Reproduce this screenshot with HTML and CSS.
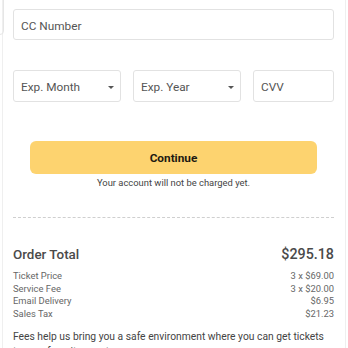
FILE: index.html
```html
<!DOCTYPE html>
<html lang="en">
<head>
    <meta charset="UTF-8">
    <meta name="viewport" content="width=device-width, initial-scale=1.0">
    <title>Checkout</title>
    <link rel="stylesheet" href="styles.css">
</head>
<body>
    <div class="peek"></div>
    <div class="card">
        <!-- Card fields -->
        <div class="field field-full">CC Number</div>

        <div class="field-row">
            <div class="field select">Exp. Month <span class="caret"></span></div>
            <div class="field select">Exp. Year <span class="caret"></span></div>
            <div class="field cvv">CVV</div>
        </div>

        <!-- Continue -->
        <button class="continue">Continue</button>
        <p class="note">Your account will not be charged yet.</p>

        <hr class="divider">

        <!-- Summary -->
        <div class="total">
            <span>Order Total</span>
            <span class="total-amount">$295.18</span>
        </div>
        <div class="line"><span>Ticket Price</span><span>3 x $69.00</span></div>
        <div class="line"><span>Service Fee</span><span>3 x $20.00</span></div>
        <div class="line"><span>Email Delivery</span><span>$6.95</span></div>
        <div class="line"><span>Sales Tax</span><span>$21.23</span></div>

        <p class="fees">Fees help us bring you a safe environment where you can get tickets to your favorite events.</p>
    </div>
</body>
</html>
```

FILE: styles.css
```css
body {
    margin: 0;
    font-family: Roboto, "Liberation Sans", Arial, sans-serif;
    background: #fff;
    color: #444;
    overflow: hidden;
    position: relative;
}

.peek {
    position: absolute;
    left: -6px;
    top: -10px;
    width: 8px;
    height: 43px;
    border: 1px solid #e6e6e6;
    border-radius: 4px;
}

.card {
    margin: 0 2px;
    border-left: 1px solid #efefef;
    border-right: 1px solid #efefef;
    padding: 9px 11px 0 10px;
    min-height: 360px;
}

.field {
    box-sizing: border-box;
    border: 1px solid #e2e2e2;
    border-radius: 3px;
    display: flex;
    align-items: center;
    padding: 2px 7px 0;
    font-size: 11.8px;
    color: #555;
}

.field-full {
    height: 31px;
}

.field-row {
    display: flex;
    gap: 12px;
    margin-top: 30px;
}

.field-row .field {
    height: 32px;
}

.select {
    width: 108px;
    justify-content: space-between;
    padding-right: 6px;
}

.cvv {
    flex: 1;
}

.caret {
    width: 0;
    height: 0;
    border-left: 3px solid transparent;
    border-right: 3px solid transparent;
    border-top: 3px solid #555;
}

.continue {
    display: block;
    width: 287px;
    height: 33px;
    margin: 39px auto 0;
    border: none;
    border-radius: 6px;
    background: #fdd36f;
    font-family: inherit;
    font-size: 11.8px;
    font-weight: 700;
    color: #1d1a12;
}

.note {
    margin: 3px 0 0;
    text-align: center;
    font-size: 9.4px;
    color: #444;
}

.divider {
    border: none;
    border-top: 1px dashed #cfcfcf;
    margin: 29px 0 0;
}

.total {
    display: flex;
    justify-content: space-between;
    align-items: baseline;
    margin-top: 28px;
    font-size: 13.4px;
    font-weight: 500;
    color: #4a4a4a;
}

.total-amount {
    font-size: 14.3px;
}

.line {
    display: flex;
    justify-content: space-between;
    font-size: 9.4px;
    line-height: 12.5px;
    color: #666;
}

.total + .line {
    margin-top: 8px;
}

.fees {
    margin: 9px 0 0;
    font-size: 10.3px;
    line-height: 15px;
    color: #444;
}
```
